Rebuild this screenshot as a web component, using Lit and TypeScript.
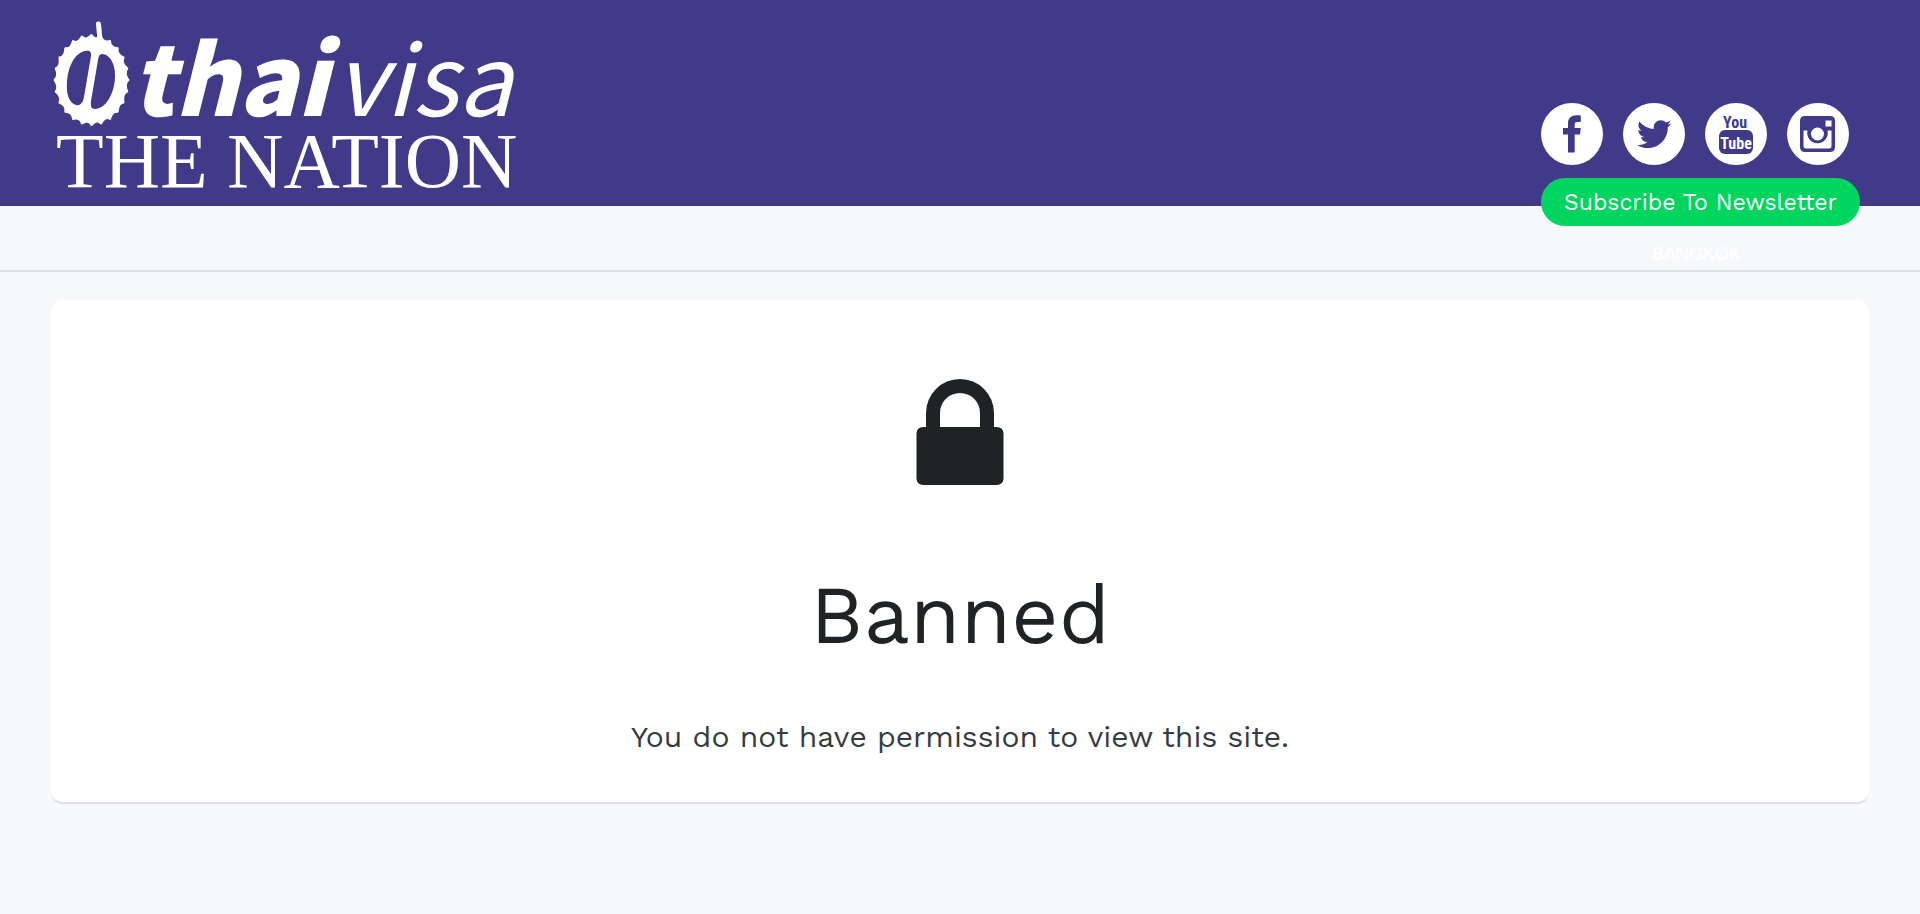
import { LitElement, html, svg, css } from "lit";
import { customElement } from "lit/decorators.js";

/** Scalloped husk outline: sharp tips joined by shallow inward curves. */
function huskPath(cx: number, cy: number, rx: number, ry: number, tips: number): string {
  const at = (i: number, scale: number) => {
    const a = (i / tips) * Math.PI * 2 - Math.PI / 2;
    return `${(cx + Math.cos(a) * rx * scale).toFixed(2)} ${(cy + Math.sin(a) * ry * scale).toFixed(2)}`;
  };
  let d = `M${at(0, 1)}`;
  for (let i = 0; i < tips; i++) {
    d += `Q${at(i + 0.35, 0.88)} ${at(i + 1, 1)}`;
  }
  return d + "Z";
}

@customElement("site-logo")
export class SiteLogo extends LitElement {
  static styles = css`
    :host { display: block; }
    .logo { display: block; width: 470px; height: 174px; overflow: visible; fill: #fff; }
    .link { display: block; }
    .strong { font: italic 900 97px "Noto Sans CJK SC", sans-serif; }
    .light { font: italic 400 97px "Noto Sans CJK SC", sans-serif; }
    .nation { font: 400 78px "Liberation Serif", serif; }
    .hole { fill: #403a88; }
    .stem { stroke: #fff; stroke-width: 5; stroke-linecap: round; }
    .husk { stroke: #fff; stroke-width: 2; stroke-linejoin: round; }
  `;
  render() {
    return html`<a class="link" href="#" aria-label="Thaivisa The Nation">
      <svg class="logo" viewBox="51 16 470 174">
        <path class="stem" d="M98.500 24L100 40" />
        <path class="husk" d=${huskPath(91.5, 80, 37, 45, 24)} />
        <path class="hole" d="M85 51C90 50 91.500 52 91 56L84 97C83 103 80 106 76 105C69 103 66 94 67 82C68 66 75 53 85 51Z" />
        <path class="hole" d="M102 54C110 54 116 65 115 78C114 95 105 109 95 109C91 109 90.500 106 91 101L98 60C98.500 56 99.500 54 102 54Z" />
        <text class="strong" x="131" y="116">thai</text>
        <text class="light" x="335" y="116">visa</text>
        <text class="nation" x="56" y="187">THE NATION</text>
      </svg>
    </a>`;
  }
}

const ICONS = [
  {
    name: "Facebook",
    art: svg`<path d="M39.800 12.600V19H36.500C33.900 19 33.700 20.200 33.700 22V25H39.800L39 31.500H33.700V49.500H27V31.500H22V25H27V20.500C27 15 30.500 12.300 35.500 12.300C37.500 12.300 39.200 12.400 39.800 12.600Z"/>`,
  },
  {
    name: "Twitter",
    art: svg`<g transform="translate(14 14) scale(0.067)"><path d="M459.370 151.716c.325 4.548.325 9.097.325 13.645 0 138.720-105.583 298.558-298.558 298.558-59.452 0-114.680-17.219-161.137-47.106 8.447.974 16.568 1.299 25.340 1.299 49.055 0 94.213-16.568 130.274-44.832-46.132-.975-84.792-31.188-98.112-72.772 6.498.974 12.995 1.624 19.818 1.624 9.421 0 18.843-1.300 27.614-3.573-48.081-9.747-84.143-51.980-84.143-102.985v-1.299c13.969 7.797 30.214 12.670 47.431 13.319-28.264-18.843-46.781-51.005-46.781-87.391 0-19.492 5.197-37.360 14.294-52.954 51.655 63.675 129.300 105.258 216.365 109.807-1.624-7.797-2.599-15.918-2.599-24.040 0-57.828 46.782-104.934 104.934-104.934 30.213 0 57.502 12.670 76.670 33.137 23.715-4.548 46.456-13.320 66.599-25.340-7.798 24.366-24.366 44.833-46.132 57.827 21.117-2.273 41.584-8.122 60.426-16.243-14.292 20.791-32.161 39.308-52.628 54.253z"/></g>`,
  },
  {
    name: "YouTube",
    art: svg`<text class="you" x="30" y="25" text-anchor="middle">You</text>
      <rect x="14" y="27" width="34" height="24" rx="6"/>
      <text class="you tube" x="31" y="46" text-anchor="middle">Tube</text>`,
  },
  {
    name: "Instagram",
    art: svg`<path fill-rule="evenodd" d="M18 13H43Q48 13 48 18V44Q48 49 43 49H18Q13 49 13 44V18Q13 13 18 13ZM38.500 17.500V23.500H44.500V17.500ZM16.500 27.500V43Q16.500 45.500 19 45.500H42Q44.500 45.500 44.500 43V27.500H40.500A10.300 10.300 0 1 1 20.500 27.500ZM30.500 24.500A6.500 6.500 0 1 0 30.500 37.500A6.500 6.500 0 1 0 30.500 24.500Z"/>`,
  },
];

@customElement("social-panel")
export class SocialPanel extends LitElement {
  static styles = css`
    :host { display: block; }
    .icons { display: flex; gap: 20px; }
    .circle { display: block; width: 62px; height: 62px; border-radius: 50%; background: #fff; }
    .glyph { display: block; width: 62px; height: 62px; fill: #403a88; }
    .you { font: 700 16px "Liberation Sans Narrow", "Roboto Condensed", Roboto, sans-serif; }
    .tube { fill: #fff; }
    .subscribe {
      display: block; width: 319px; height: 48px; margin-top: 13px; padding: 0; border: 0;
      border-radius: 24px; background: #00d65f; color: #fff; cursor: pointer;
      font: 400 23px "Work Sans", Inter, sans-serif; white-space: nowrap;
    }
    .city {
      margin: 15px 0 0; padding-right: 8px; text-align: center; color: #fff;
      font: 400 18px/26px "Liberation Sans", sans-serif;
    }
  `;
  render() {
    return html`
      <div class="icons">
        ${ICONS.map(
          (i) => html`<a class="circle" href="#" aria-label=${i.name}>
            <svg class="glyph" viewBox="0 0 62 62">${i.art}</svg>
          </a>`
        )}
      </div>
      <button class="subscribe" type="button">Subscribe To Newsletter</button>
      <p class="city">BANGKOK</p>
    `;
  }
}

@customElement("app-root")
export class AppRoot extends LitElement {
  static styles = css`
    :host {
      display: block; min-height: 100vh; background: #f6f8fa; color: #1f2326;
      font-family: "Work Sans", Inter, sans-serif;
    }
    .header {
      display: flex; justify-content: space-between; align-items: flex-start;
      padding: 16px 51px; background: #403a88;
    }
    .social { position: relative; margin: 87px 9px -80px 0; }
    .bar { height: 64px; border-bottom: 2px solid #dfe1e4; }
    .card {
      display: flex; flex-direction: column; align-items: center; text-align: center;
      margin: 28px 51px; padding: 79px 24px 45px; background: #fff;
      border-bottom: 2px solid #dfe1e4; border-radius: 12px;
    }
    .lock { display: block; width: 88px; height: 106px; fill: #1f2326; }
    .title { margin: 85px 0 0; font-size: 82px; line-height: 90px; font-weight: 400; }
    .message { margin: 57px 0 0; font-size: 30px; line-height: 40px; color: #353c41; }
  `;
  render() {
    return html`
      <header class="header">
        <site-logo></site-logo>
        <social-panel class="social"></social-panel>
      </header>
      <div class="bar"></div>
      <main class="card">
        <svg class="lock" viewBox="0 0 88 106" aria-hidden="true">
          <path fill-rule="evenodd" d="M10 48V34A34 34 0 0 1 78 34V48H80.500Q87.500 48 87.500 55V99Q87.500 106 80.500 106H7.500Q0.500 106 0.500 99V55Q0.500 48 7.500 48ZM24 48H64V34A20 20 0 0 0 24 34Z" />
        </svg>
        <h1 class="title">Banned</h1>
        <p class="message">You do not have permission to view this site.</p>
      </main>
    `;
  }
}
